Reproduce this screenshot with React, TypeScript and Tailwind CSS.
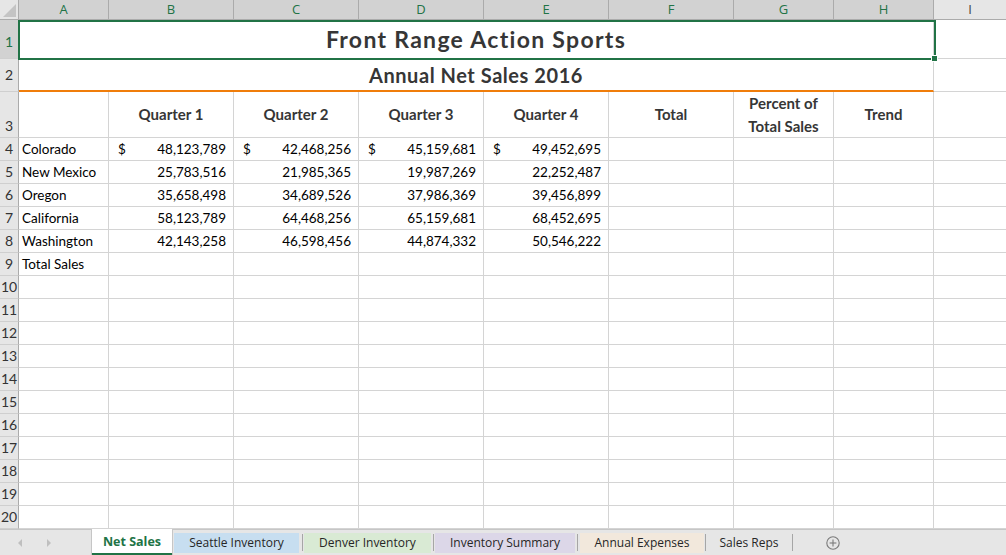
import React from "react";

const COLS = ["A", "B", "C", "D", "E", "F", "G", "H"];

const DATA: [string, string, string, string, string][] = [
  ["Colorado", "48,123,789", "42,468,256", "45,159,681", "49,452,695"],
  ["New Mexico", "25,783,516", "21,985,365", "19,987,269", "22,252,487"],
  ["Oregon", "35,658,498", "34,689,526", "37,986,369", "39,456,899"],
  ["California", "58,123,789", "64,468,256", "65,159,681", "68,452,695"],
  ["Washington", "42,143,258", "46,598,456", "44,874,332", "50,546,222"],
  ["Total Sales", "", "", "", ""],
];

const GRID = "border-r border-b border-[#d4d4d4]";

function RowHead({ n, cls = "items-center", selected = false }: { n: number; cls?: string; selected?: boolean }) {
  return (
    <div
      className={`flex justify-center border-r border-b border-r-[#ababab] border-b-[#cfcfcf] text-[14px] ${cls} ${
        selected ? "bg-[#d2d2d2] text-[#217346]" : "bg-[#e6e6e6] text-[#333]"
      }`}
    >
      <div className="w-[12px] flex justify-center leading-[16px]">
        <span className="whitespace-nowrap">{n}</span>
      </div>
    </div>
  );
}

function Empty({ last = false }: { last?: boolean }) {
  return <div className={last ? "border-b border-[#d4d4d4]" : GRID} />;
}

function TabSep() {
  return <div className="w-px h-[17px] self-center bg-[#a6a6a6]" />;
}

export default function App() {
  const rows: React.ReactNode[] = [];

  // header row
  rows.push(
    <div key="corner" className="relative bg-[#e6e6e6] border-r border-b border-[#ababab]">
      <svg className="absolute left-0 top-0" width="18" height="19" viewBox="0 0 18 19">
        <polygon points="16,4 16,17 3,17" fill="#c4c4c4" />
      </svg>
    </div>
  );
  COLS.forEach((c) =>
    rows.push(
      <div
        key={"h" + c}
        className="flex items-center justify-center bg-[#d2d2d2] border-r border-b border-[#ababab] text-[#217346] text-[13px] font-['Open_Sans',sans-serif]"
      >
        {c}
      </div>
    )
  );
  rows.push(
    <div
      key="hI"
      className="flex items-center justify-center bg-[#e6e6e6] border-b border-[#ababab] text-[#444] text-[13px] font-['Open_Sans',sans-serif]"
    >
      I
    </div>
  );

  // row 1
  rows.push(<RowHead key="r1" n={1} cls="items-end pb-[8px]" selected />);
  rows.push(
    <div key="t1" className={`col-span-8 relative flex items-center justify-center ${GRID}`}>
      <span className="text-[23px] font-bold text-[#363636] tracking-[1.3px]">Front Range Action Sports</span>
      <div className="absolute left-[-1px] top-0 w-[918px] h-[40px] border-2 border-[#217346] z-10 pointer-events-none" />
      <div className="absolute left-[912px] top-[35px] w-[7px] h-[7px] bg-[#217346] border border-white z-20" />
    </div>
  );
  rows.push(<Empty key="i1" last />);

  // row 2
  rows.push(<RowHead key="r2" n={2} cls="items-end pb-[8px]" />);
  rows.push(
    <div
      key="t2"
      className="col-span-8 flex items-center justify-center border-r border-r-[#d4d4d4] border-b-2 border-b-[#f07d0a]"
    >
      <span className="text-[20px] font-bold text-[#363636] tracking-[0.55px]">Annual Net Sales 2016</span>
    </div>
  );
  rows.push(<Empty key="i2" last />);

  // row 3
  rows.push(<RowHead key="r3" n={3} cls="items-end pb-[3px]" />);
  rows.push(<Empty key="a3" />);
  ["Quarter 1", "Quarter 2", "Quarter 3", "Quarter 4", "Total"].forEach((t) =>
    rows.push(
      <div key={"h3" + t} className={`flex items-center justify-center text-[15px] font-bold text-[#363636] ${GRID}`}>
        {t}
      </div>
    )
  );
  rows.push(
    <div
      key="h3pct"
      className={`flex flex-col items-center justify-center text-[15px] font-bold text-[#363636] leading-[23px] ${GRID}`}
    >
      <span>Percent of</span>
      <span>Total Sales</span>
    </div>
  );
  rows.push(
    <div key="h3trend" className={`flex items-center justify-center text-[15px] font-bold text-[#363636] ${GRID}`}>
      Trend
    </div>
  );
  rows.push(<Empty key="i3" last />);

  // data rows 4..20
  for (let r = 4; r <= 20; r++) {
    const d = DATA[r - 4];
    rows.push(<RowHead key={"r" + r} n={r} />);
    if (d) {
      rows.push(
        <div key={"a" + r} className={`flex items-center pl-[3px] pt-px text-[13.5px] text-black ${GRID}`}>
          {d[0]}
        </div>
      );
      for (let c = 1; c <= 4; c++) {
        rows.push(
          <div
            key={"c" + r + c}
            className={`flex items-center justify-between pl-[9px] pr-[7px] pt-px text-[13.5px] text-black ${GRID}`}
          >
            <span>{r === 4 ? "$" : ""}</span>
            <span>{d[c]}</span>
          </div>
        );
      }
      for (let c = 5; c <= 7; c++) rows.push(<Empty key={"e" + r + c} />);
    } else {
      for (let c = 0; c <= 7; c++) rows.push(<Empty key={"e" + r + c} />);
    }
    rows.push(<Empty key={"i" + r} last />);
  }

  return (
    <div className="w-[1006px] h-[555px] overflow-hidden bg-white flex flex-col font-['Lato',sans-serif]">
      <div className="grid grid-cols-[19px_90px_125px_125px_125px_125px_125px_100px_100px_72px] grid-rows-[20px_39px_33px_46px_repeat(17,23px)] h-[529px] shrink-0">
        {rows}
      </div>
      <div className="h-[26px] flex bg-[#e6e6e6] border-t border-[#c6c6c6] font-['Open_Sans',sans-serif] text-[12px] text-[#262626] shrink-0">
        <div className="w-[91px] flex items-center">
          <svg className="ml-[18px]" width="5" height="8" viewBox="0 0 5 8">
            <polygon points="4,0 4,8 0,4" fill="#bfbfbf" />
          </svg>
          <svg className="ml-[24px]" width="5" height="8" viewBox="0 0 5 8">
            <polygon points="0,0 0,8 4,4" fill="#bfbfbf" />
          </svg>
        </div>
        <div className="w-[82px] -mt-px relative bg-white border-x border-[#c6c6c6] flex items-center justify-center font-bold text-[#217346] text-[12.5px]">
          Net Sales
          <div className="absolute left-0 right-0 bottom-0 h-[2px] bg-[#217346]" />
        </div>
        <div className="ml-px w-[125px] mt-[3px] mb-[2px] bg-[#c7def0] flex items-center justify-center">
          Seattle Inventory
        </div>
        <div className="ml-[3px] flex">
          <TabSep />
        </div>
        <div className="ml-px w-[127px] mt-[3px] mb-[2px] bg-[#d9ead4] flex items-center justify-center">
          Denver Inventory
        </div>
        <div className="ml-[2px] flex">
          <TabSep />
        </div>
        <div className="ml-px w-[140px] mt-[3px] mb-[2px] bg-[#dcd7e8] flex items-center justify-center">
          Inventory Summary
        </div>
        <div className="ml-[2px] flex">
          <TabSep />
        </div>
        <div className="ml-[2px] w-[124px] mt-[3px] mb-[2px] bg-[#f2e8dc] flex items-center justify-center">
          Annual Expenses
        </div>
        <div className="ml-px flex">
          <TabSep />
        </div>
        <div className="w-[86px] flex items-center justify-center">Sales Reps</div>
        <div className="flex">
          <TabSep />
        </div>
        <div className="ml-[33px] flex items-center">
          <svg width="14" height="14" viewBox="0 0 14 14">
            <circle cx="7" cy="7" r="6.2" fill="none" stroke="#7a7a7a" strokeWidth="1.1" />
            <line x1="7" y1="3.6" x2="7" y2="10.4" stroke="#7a7a7a" strokeWidth="1.1" />
            <line x1="3.6" y1="7" x2="10.4" y2="7" stroke="#7a7a7a" strokeWidth="1.1" />
          </svg>
        </div>
      </div>
    </div>
  );
}
